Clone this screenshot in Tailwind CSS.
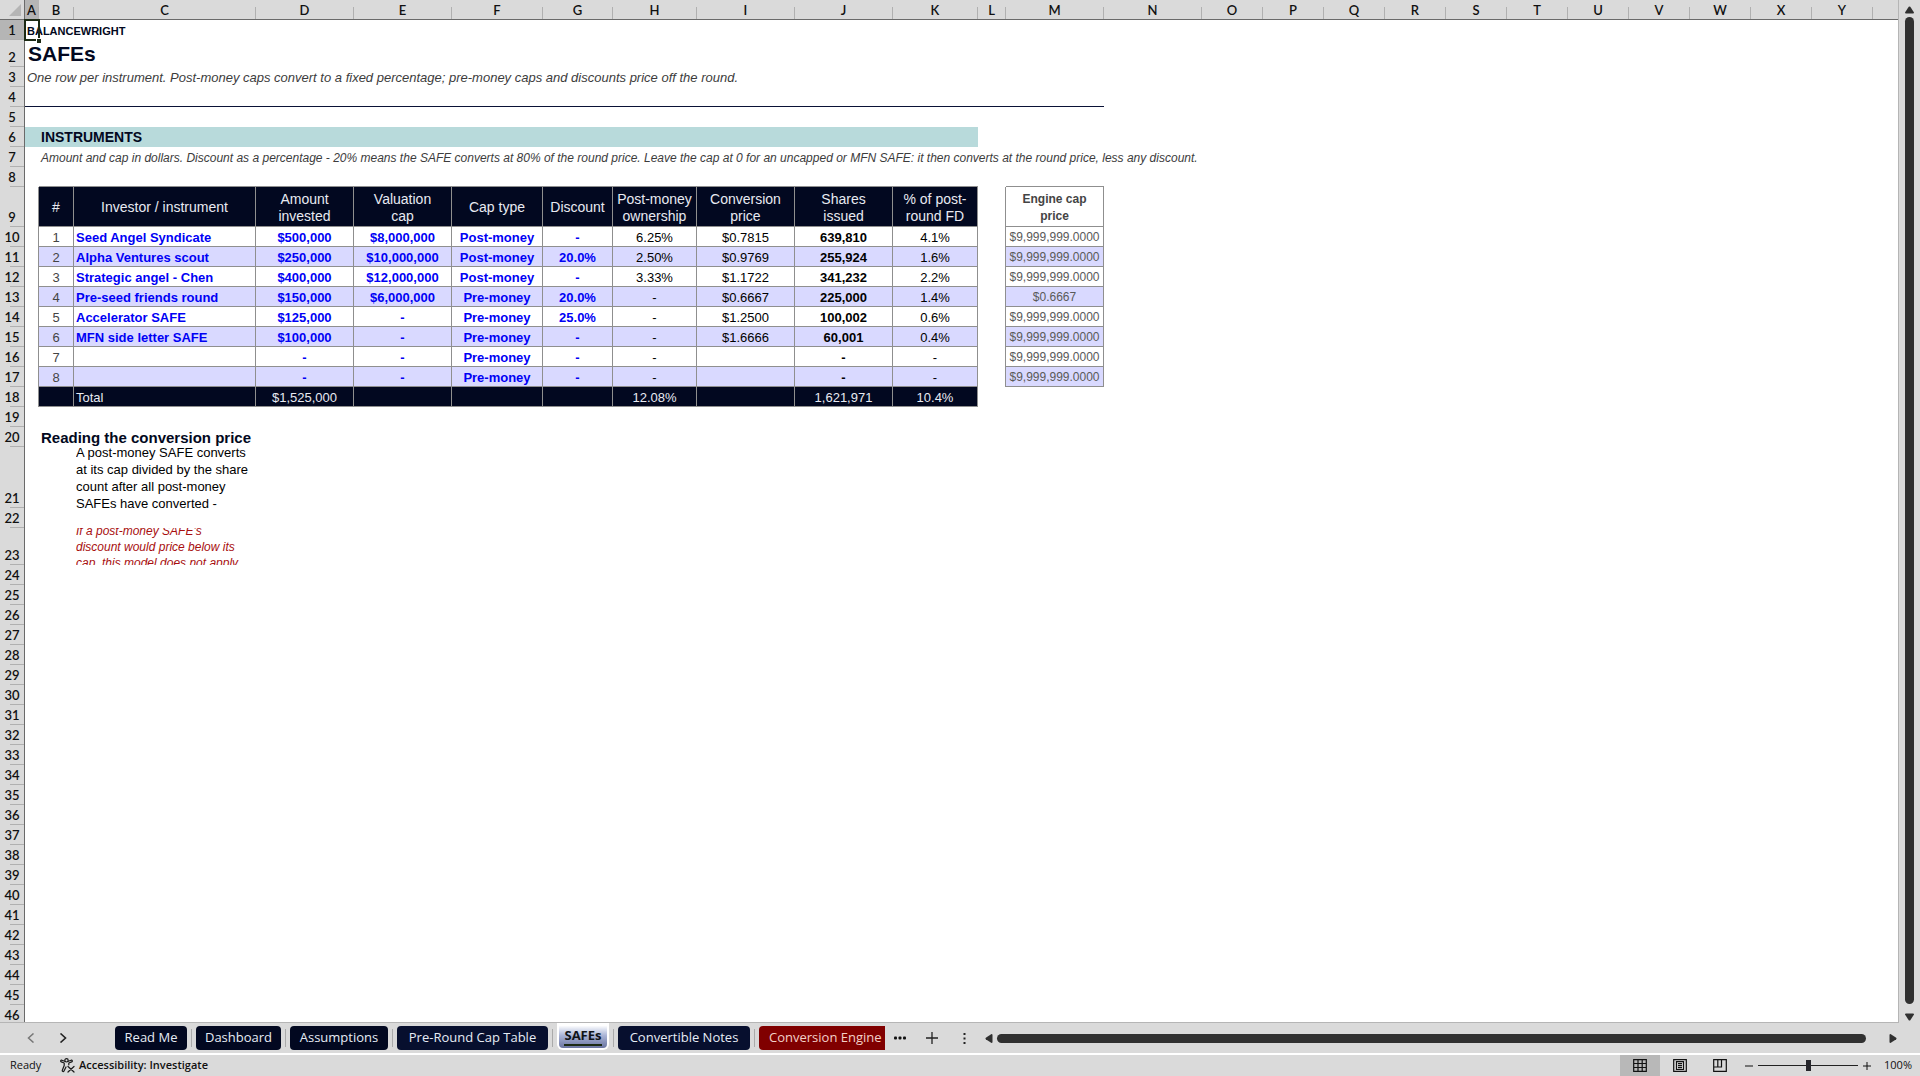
<!DOCTYPE html>
<html lang="en">
<head>
  <meta charset="UTF-8">
  <meta name="viewport" content="width=device-width, initial-scale=1.0">
  <title>SAFEs - Balancewright</title>
  <script src="https://cdn.jsdelivr.net/npm/@tailwindcss/browser@4"></script>
</head>
<body class="flex h-screen flex-col overflow-hidden bg-[#dadada] font-['Liberation_Sans',sans-serif] text-[13px] text-black">

  <!-- Sheet -->
  <main class="flex min-h-0 flex-1">
    <div class="min-w-0 flex-1 overflow-hidden border-r border-b border-[#b5b5b5] bg-white">
      <table class="w-full min-w-[1898px] table-fixed border-separate border-spacing-0">
        <colgroup id="cols"></colgroup>
        <thead><tr id="letters" class="h-5"></tr></thead>
        <tbody id="rows"></tbody>
      </table>
    </div>
    <div class="flex w-[21px] flex-col items-center pt-1">
      <button aria-label="Scroll up" class="flex h-3 w-full items-center justify-center"><svg width="9" height="8" viewBox="0 0 9 8" fill="#303030"><path d="M3.7 .8Q4.5 0 5.3 .8L9 6.5Q9 7.5 8 7.5H1Q0 7.5 0 6.5Z"/></svg></button>
      <div class="my-px w-[9px] flex-1 rounded-full bg-[#303030]"></div>
      <button aria-label="Scroll down" class="mt-1.5 flex h-3 w-full items-center justify-center"><svg width="9" height="8" viewBox="0 0 9 8" fill="#303030"><path d="M3.7 7.2Q4.5 8 5.3 7.2L9 1.5Q9 .5 8 .5H1Q0 .5 0 1.5Z"/></svg></button>
    </div>
  </main>

  <!-- Sheet tabs -->
  <nav class="flex h-8 shrink-0 items-center border-b-2 border-white font-['Open_Sans',sans-serif] text-[13px] text-[#e6ecf5]">
    <div class="flex w-[115px] shrink-0 items-center gap-4 pl-[23px]">
      <button aria-label="Previous sheet" class="flex h-6 w-4 items-center justify-center"><svg width="8" height="10" viewBox="0 0 8 10" fill="none" stroke="#777" stroke-width="1.5"><path d="M6.500 .5 1.500 5l5 4.500"/></svg></button>
      <button aria-label="Next sheet" class="flex h-6 w-4 items-center justify-center"><svg width="8" height="10" viewBox="0 0 8 10" fill="none" stroke="#222" stroke-width="1.600"><path d="M1.500 .5l5 4.500-5 4.500"/></svg></button>
    </div>
    <div class="flex h-full w-[770px] shrink-0 items-center gap-1 overflow-hidden whitespace-nowrap">
      <button class="h-6 w-[72px] shrink-0 rounded bg-[#020820]">Read Me</button>
      <span class="h-[18px] w-px shrink-0 bg-[#aaa]"></span>
      <button class="h-6 w-[85px] shrink-0 rounded bg-[#020820]">Dashboard</button>
      <span class="h-[18px] w-px shrink-0 bg-[#aaa]"></span>
      <button class="h-6 w-[98px] shrink-0 rounded bg-[#020820]">Assumptions</button>
      <span class="h-[18px] w-px shrink-0 bg-[#aaa]"></span>
      <button class="h-6 w-[151px] shrink-0 rounded bg-[#070f2e]">Pre-Round Cap Table</button>
      <span class="h-[18px] w-px shrink-0 bg-[#aaa]"></span>
      <div class="h-full w-[52px] shrink-0 pb-[3px]">
        <button aria-current="page" class="flex h-full w-full flex-col items-center rounded-b-md border-x-2 border-b-2 border-white bg-linear-to-b from-white from-10% via-[#aab4d6] via-50% to-[#6a74a0] pt-1 font-bold leading-[17px] text-[#101418]">SAFEs<span class="h-0.5 w-[38px] bg-[#1c2a14]"></span></button>
      </div>
      <span class="h-[18px] w-px shrink-0 bg-[#aaa]"></span>
      <button class="h-6 w-[132px] shrink-0 rounded bg-[#070f2e]">Convertible Notes</button>
      <span class="h-[18px] w-px shrink-0 bg-[#aaa]"></span>
      <button class="h-6 w-[140px] shrink-0 rounded bg-[#800000] pl-2.5 text-left text-[#f3d0c8]">Conversion Engine</button>
    </div>
    <button aria-label="More sheets" class="flex h-6 w-[30px] shrink-0 items-center justify-center"><svg width="12" height="4" viewBox="0 0 12 4" fill="#111"><rect y=".5" width="3" height="3" rx="1"/><rect x="4.500" y=".5" width="3" height="3" rx="1"/><rect x="9" y=".5" width="3" height="3" rx="1"/></svg></button>
    <button aria-label="New sheet" class="flex h-6 w-[34px] shrink-0 items-center justify-center"><svg width="12" height="12" viewBox="0 0 12 12" stroke="#222" stroke-width="1.300"><path d="M6 0v12M0 6h12"/></svg></button>
    <button aria-label="Resize tab bar" class="flex h-6 w-[30px] shrink-0 items-center justify-center"><svg width="3" height="11" viewBox="0 0 3 11" fill="#222"><path d="M.5 0h2v2h-2zM.5 4.500h2v2h-2zM.5 9h2v2h-2z"/></svg></button>
    <button aria-label="Scroll left" class="flex h-6 w-[18px] shrink-0 items-center justify-end pr-1"><svg width="8" height="9" viewBox="0 0 8 9" fill="#303030"><path d="M.8 3.700Q0 4.500 .8 5.300L6.500 9Q7.500 9 7.500 8V1Q7.500 0 6.500 0Z"/></svg></button>
    <div class="h-[9px] flex-1 rounded-full bg-[#303030]"></div>
    <button aria-label="Scroll right" class="flex h-6 w-[54px] shrink-0 items-center pl-[23px]"><svg width="8" height="9" viewBox="0 0 8 9" fill="#303030"><path d="M7.200 3.700Q8 4.500 7.200 5.300L1.500 9Q.5 9 .5 8V1Q.5 0 1.500 0Z"/></svg></button>
  </nav>

  <!-- Status bar -->
  <footer class="flex h-[21px] shrink-0 items-center pr-2 font-['Open_Sans',sans-serif] text-[11px] text-[#111]">
    <span class="w-[60px] pl-2.5">Ready</span>
    <button class="flex items-center gap-1 font-semibold">
      <svg width="15" height="15" viewBox="0 0 15 15" fill="none" stroke="#1a1a1a" stroke-width="1.200" stroke-linecap="round" stroke-linejoin="round"><circle cx="6.500" cy="2.300" r="1.700"/><path d="M4.800 3.300 1.800 2.200C.6 1.900 .3 3.500 1.300 3.900L4.200 5v2.500L2.300 12.300c-.3 1.200 1.200 1.700 1.700 .7L6 9M8.200 3.300l3-1.100c1.200-.3 1.500 1.300 .5 1.700L8.800 5v1.800M8 8.500l6 5.500M14 8.500 8 14"/></svg>
      Accessibility: Investigate
    </button>
    <div class="ml-auto flex h-full items-center">
      <button aria-label="Normal view" class="flex h-full w-10 items-center justify-center bg-[#b8b8b8]"><svg width="14" height="13" viewBox="0 0 14 13" fill="none" stroke="#111" stroke-width="1.200"><path d="M.7 .6h12.600v11.800H.7zM5 .6v11.800M9.200 .6v11.800M.7 4.500h12.600M.7 8.500h12.600"/></svg></button>
      <button aria-label="Page layout" class="flex h-full w-10 items-center justify-center"><svg width="14" height="13" viewBox="0 0 14 13" fill="none" stroke="#111" stroke-width="1.200"><path d="M.7 .6h12.600v11.800H.7zM3.500 2.700h7v7.800h-7zM5 4.600h4M5 6.600h4M5 8.600h4"/></svg></button>
      <button aria-label="Page break preview" class="flex h-full w-10 items-center justify-center"><svg width="14" height="13" viewBox="0 0 14 13" fill="none" stroke="#111" stroke-width="1.200"><path d="M.7 .6h12.600v11.800H.7zM.7 8h7.800V.6M4.800 .6V8"/></svg></button>
      <button aria-label="Zoom out" class="flex h-full w-[18px] items-center justify-center"><svg width="8" height="8" viewBox="0 0 8 8" stroke="#111"><path d="M0 4h8"/></svg></button>
      <input type="range" aria-label="Zoom" min="10" max="190" value="100" class="h-4 w-[100px] appearance-none bg-[linear-gradient(#222,#222)] bg-[length:100%_1px] bg-center bg-no-repeat [&::-webkit-slider-thumb]:h-[11px] [&::-webkit-slider-thumb]:w-[5px] [&::-webkit-slider-thumb]:appearance-none [&::-webkit-slider-thumb]:bg-[#26262b]">
      <button aria-label="Zoom in" class="flex h-full w-[18px] items-center justify-center"><svg width="8" height="8" viewBox="0 0 8 8" stroke="#111"><path d="M0 4h8M4 0v8"/></svg></button>
      <button class="w-9 text-right">100%</button>
    </div>
  </footer>

  <script>
    const widths = [25, 14, 35, 182, 98, 98, 91, 70, 84, 98, 98, 85, 28, 98, 98, 61, 61, 61, 61, 61, 61, 61, 61, 61, 61, 61];
    const letters = 'ABCDEFGHIJKLMNOPQRSTUVWXY'.split('');

    document.getElementById('cols').innerHTML =
      widths.map(w => `<col style="width:${w}px">`).join('') + '<col>';

    const headBase = "border-b border-[#6a6a6a] p-0 font-['Lato',sans-serif] font-semibold text-[#111]";
    document.getElementById('letters').innerHTML =
      `<th class="border-r border-b border-[#6a6a6a] bg-[#dadada] p-0"><svg class="ml-auto mr-0.5" width="13" height="12" viewBox="0 0 13 12" fill="#b5b5b5"><path d="M12 0v12H0z"/></svg></th>` +
      letters.map(l => `<th class="${headBase} ${l === 'A' ? 'bg-[#b5b5b5]' : 'bg-[#dadada]'}"><div class="flex h-[19px] items-end"><span class="flex-1 text-center leading-[17px]">${l}</span><span class="h-3 w-px bg-[#b0b0b0]"></span></div></th>`).join('') +
      `<th class="${headBase} bg-[#dadada]"></th>`;

    // Cell styles
    const line = 'border-r border-b border-[#8f8f8f] p-0 pt-0.5 text-center align-middle leading-[17px] ';
    const S = {
      edge: 'border-r border-[#8f8f8f] p-0',
      head: line + 'bg-[#020820] text-sm leading-[17px] text-[#e8eaf2]',
      num: line + 'text-[#444]',
      name: line + 'pl-0.5 text-left font-bold text-[#0000f5] whitespace-nowrap',
      input: line + 'font-bold text-[#0000f5]',
      calc: line,
      bold: line + 'font-bold',
      engine: line + 'text-xs leading-[17px] text-[#595959]',
      engineHead: line + 'text-xs leading-[17px] font-bold text-[#444]',
      total: line + 'bg-[#020820] text-[#e8eaf2]',
      totalName: line + 'bg-[#020820] pl-0.5 text-left text-[#e8eaf2]',
    };
    const dark = 'border-b border-[#8f8f8f] p-0';
    const free = 'p-0 whitespace-nowrap ';

    // Each row: height class and cells as [class, content, span]
    const rows = [
      ['h-5', [[free + 'relative pl-0.5 align-bottom text-[11px] leading-[18px] font-bold text-[#020820]',
        'BALANCEWRIGHT<span class="absolute -top-px -left-px h-[22px] w-4 border-2 border-[#1c2a14]"></span><span class="absolute top-[18px] left-[11px] size-[5px] border-t border-l border-white bg-[#1c2a14]"></span>']]],
      ['h-[27px]', [[free + 'pl-[3px] align-middle text-[21px] leading-6 font-bold text-[#020820]', 'SAFEs']]],
      ['h-5', [[free + 'pl-0.5 align-bottom text-[13px] leading-[18px] italic text-[#3c3c3c]', 'One row per instrument. Post-money caps convert to a fixed percentage; pre-money caps and discounts price off the round.']]],
      ['h-5', [['border-b border-[#0a1236] p-0', '', 13]]],
      ['h-5', []],
      ['h-5', [['bg-[#b8dadb] p-0', ''], ['bg-[#b8dadb] p-0 pl-0.5 text-sm leading-[18px] font-bold text-[#020820]', 'INSTRUMENTS', 10]]],
      ['h-5', [['p-0', ''], [free + 'pl-0.5 align-bottom text-xs leading-[18px] italic text-[#3c3c3c]', 'Amount and cap in dollars. Discount as a percentage - 20% means the SAFE converts at 80% of the round price. Leave the cap at 0 for an uncapped or MFN SAFE: it then converts at the round price, less any discount.']]],
      ['h-5', [['p-0', ''], [dark, '', 10], ['p-0', ''], [dark, '']]],
      ['h-10', [[S.edge, ''], [S.head, '#'], [S.head, 'Investor / instrument'], [S.head, 'Amount<br>invested'], [S.head, 'Valuation<br>cap'], [S.head, 'Cap type'], [S.head, 'Discount'], [S.head, 'Post-money ownership'], [S.head, 'Conversion price'], [S.head, 'Shares<br>issued'], [S.head, '% of post-<br>round FD'], [S.edge, ''], [S.engineHead, 'Engine cap<br>price']]],
    ];

    const safes = [
      ['Seed Angel Syndicate', '$500,000', '$8,000,000', 'Post-money', '-', '6.25%', '$0.7815', '639,810', '4.1%', '$9,999,999.0000'],
      ['Alpha Ventures scout', '$250,000', '$10,000,000', 'Post-money', '20.0%', '2.50%', '$0.9769', '255,924', '1.6%', '$9,999,999.0000'],
      ['Strategic angel - Chen', '$400,000', '$12,000,000', 'Post-money', '-', '3.33%', '$1.1722', '341,232', '2.2%', '$9,999,999.0000'],
      ['Pre-seed friends round', '$150,000', '$6,000,000', 'Pre-money', '20.0%', '-', '$0.6667', '225,000', '1.4%', '$0.6667'],
      ['Accelerator SAFE', '$125,000', '-', 'Pre-money', '25.0%', '-', '$1.2500', '100,002', '0.6%', '$9,999,999.0000'],
      ['MFN side letter SAFE', '$100,000', '-', 'Pre-money', '-', '-', '$1.6666', '60,001', '0.4%', '$9,999,999.0000'],
      ['', '-', '-', 'Pre-money', '-', '-', '', '-', '-', '$9,999,999.0000'],
      ['', '-', '-', 'Pre-money', '-', '-', '', '-', '-', '$9,999,999.0000'],
    ];
    safes.forEach((s, i) => {
      const bg = i % 2 ? ' bg-[#d9d9ff]' : '';
      const kinds = [S.name, S.input, S.input, S.input, S.input, S.calc, S.calc, S.bold, S.calc];
      rows.push(['h-5', [
        [S.edge, ''], [S.num + bg, i + 1],
        ...kinds.map((k, n) => [k + bg, s[n]]),
        [S.edge, ''], [S.engine + bg, s[9]],
      ]]);
    });

    rows.push(['h-5', [[S.edge, ''], [S.total, ''], [S.totalName, 'Total'], ...['$1,525,000', '', '', '', '12.08%', '', '1,621,971', '10.4%'].map(t => [S.total, t])]]);
    rows.push(['h-5', []]);
    rows.push(['h-5', [['p-0', ''], [free + 'pl-0.5 align-bottom text-[15px] leading-[18px] font-bold text-[#020820]', 'Reading the conversion price']]]);
    // Text taller than its row is cut at the row's edges
    rows.push(['h-[61px]', [['p-0', ''], ['p-0', ''], ['p-0 pl-0.5 align-top', '<div class="flex h-[61px] items-center overflow-hidden leading-[17px]"><p class="shrink-0">A post-money SAFE converts<br>at its cap divided by the share<br>count after all post-money<br>SAFEs have converted -</p></div>']]]);
    rows.push(['h-5', []]);
    rows.push(['h-[37px]', [['p-0', ''], ['p-0', ''], ['p-0 pl-0.5 align-top', '<div class="flex h-[37px] items-center overflow-hidden text-xs leading-4 italic text-[#a80f0f]"><p class="shrink-0">If a post-money SAFE\'s<br>discount would price below its<br>cap, this model does not apply</p></div>']]]);
    while (rows.length < 46) rows.push(['h-5', []]);

    document.getElementById('rows').innerHTML = rows.map(([h, cells], i) => `
      <tr class="${h}">
        <th class="border-r border-[#6a6a6a] p-0 align-bottom font-['Lato',sans-serif] text-[13px] font-semibold text-[#111] ${i === 0 ? 'bg-[#b5b5b5]' : 'bg-[#dadada]'}">
          <div class="flex flex-col items-end"><span class="w-full text-center leading-[17px]">${i + 1}</span><span class="h-px w-3.5 bg-[#b0b0b0]"></span></div>
        </th>
        ${cells.map(([c, t, span]) => `<td class="${c}"${span ? ` colspan="${span}"` : ''}>${t}</td>`).join('')}
      </tr>`).join('');
  </script>
</body>
</html>
